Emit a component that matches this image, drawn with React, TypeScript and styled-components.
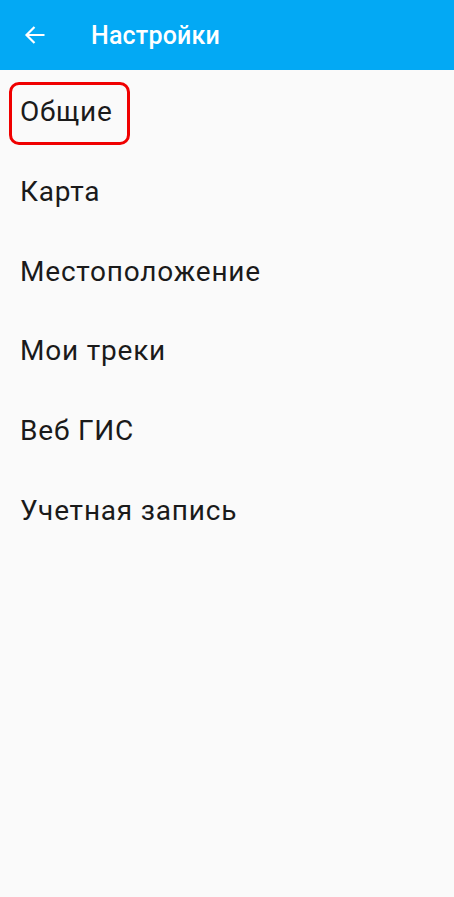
import styled, {createGlobalStyle} from "styled-components";

const GlobalStyle = createGlobalStyle`
  html, body {
    margin: 0;
    padding: 0;
    background: #fafafa;
    font-family: Roboto, "Noto Sans", sans-serif;
  }
`

const Screen = styled.div`
  width: 454px;
  min-height: 897px;
  background: #fafafa;
`

const Toolbar = styled.header`
  height: 70px;
  background: #03a9f4;
  display: flex;
  align-items: center;
  color: #fff;
`

const BackButton = styled.button`
  width: 70px;
  height: 70px;
  display: flex;
  align-items: center;
  justify-content: center;
  background: none;
  border: none;
  padding: 0;
  color: #fff;
`

const Title = styled.h1`
  margin: 0 0 0 21px;
  font-size: 25px;
  font-weight: 500;
  letter-spacing: 0.2px;
`

const List = styled.ul`
  list-style: none;
  margin: 0;
  padding: 2px 0 0;
`

const Item = styled.li`
  position: relative;
  height: 79.7px;
  display: flex;
  align-items: center;
  padding-left: 20px;
  font-size: 28px;
  letter-spacing: 0.8px;
  color: #1a1a1a;
`

const Highlight = styled.span`
  position: absolute;
  left: 9px;
  top: 10px;
  width: 121px;
  height: 63px;
  box-sizing: border-box;
  border: 3px solid #f00000;
  border-radius: 10px;
`

const items = ['Общие', 'Карта', 'Местоположение', 'Мои треки', 'Веб ГИС', 'Учетная запись']

export default function App() {
  return (
    <Screen>
      <GlobalStyle/>
      <Toolbar>
        <BackButton aria-label="Назад">
          <svg width="24" height="24" viewBox="0 0 24 24" fill="none" stroke="currentColor" strokeWidth="2.2">
            <path d="M21.5 12H3.5M11.5 4l-8 8 8 8"/>
          </svg>
        </BackButton>
        <Title>Настройки</Title>
      </Toolbar>
      <List>
        {items.map((item, i) => (
          <Item key={item}>
            {item}
            {i === 0 && <Highlight/>}
          </Item>
        ))}
      </List>
    </Screen>
  )
}
